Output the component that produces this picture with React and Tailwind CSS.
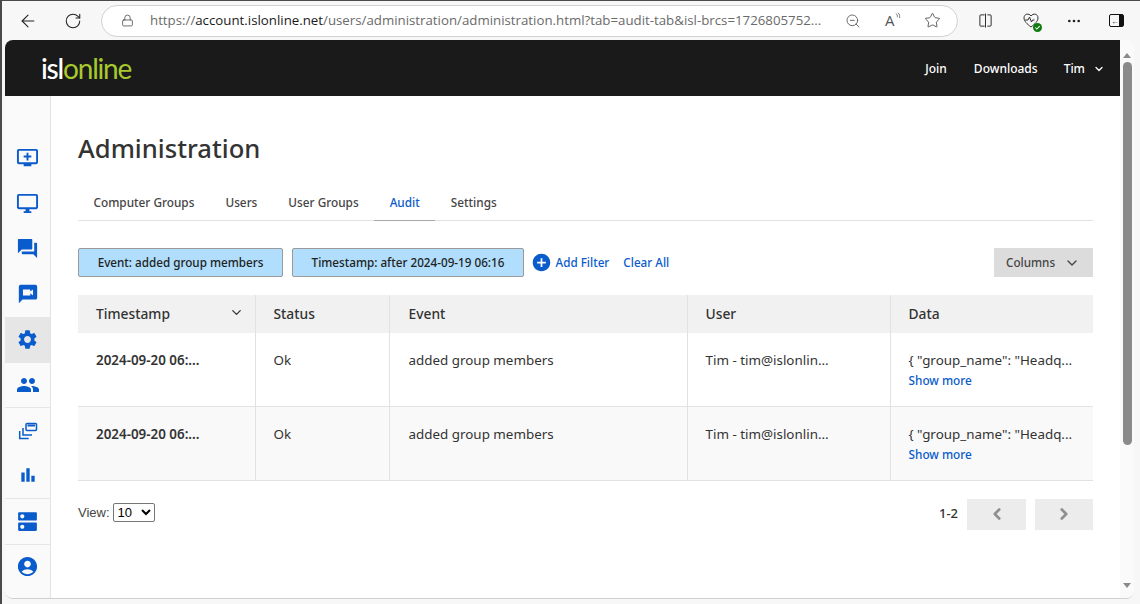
import React from "react";
import { ArrowLeft, RotateCw, Lock, ZoomOut, Star, MoreHorizontal, ChevronDown, ChevronLeft, ChevronRight } from "lucide-react";
import {
  MdAddToQueue,
  MdOutlineDesktopWindows,
  MdForum,
  MdSettings,
  MdPeople,
  MdBarChart,
  MdDns,
  MdAccountCircle,
  MdAddCircle,
} from "react-icons/md";

function WindowsIcon({ className }) {
  return (
    <svg viewBox="0 0 20 20" className={className} fill="none" stroke="currentColor" strokeWidth="1.5">
      <rect x="8" y="2.5" width="10.5" height="7" rx="1" fill="none" />
      <rect x="9.5" y="3.500" width="7.5" height="2" fill="currentColor" stroke="none" />
      <path d="M5 7v7h9" />
      <path d="M1.700 10v7.500h9" />
    </svg>
  );
}

function VideoBubble({ className }) {
  return (
    <svg viewBox="0 0 24 24" className={className}>
      <path
        fill="currentColor"
        fillRule="evenodd"
        d="M4 2h16a2 2 0 0 1 2 2v12a2 2 0 0 1-2 2H6l-4 4V4a2 2 0 0 1 2-2zM6.500 7v6.500h8v-2.300l3 2.300V7l-3 2.300V7z"
      />
    </svg>
  );
}

const sidebarItems = [
  { icon: <MdAddToQueue className="w-[23px] h-[23px]" /> },
  { icon: <MdOutlineDesktopWindows className="w-[23px] h-[23px]" /> },
  { icon: <MdForum className="w-[23px] h-[23px]" /> },
  { icon: <VideoBubble className="w-[22px] h-[22px]" /> },
  { icon: <MdSettings className="w-[23px] h-[23px]" />, active: true },
  { icon: <MdPeople className="w-[24px] h-[24px]" />, line: true },
  { icon: <WindowsIcon className="w-[20px] h-[20px]" />, line: true },
  { icon: <MdBarChart className="w-[20px] h-[20px]" /> },
  { icon: <MdDns className="w-[25px] h-[25px]" />, line: true },
  { icon: <MdAccountCircle className="w-[23px] h-[23px]" />, line: true },
];

const rows = [
  { bg: "bg-white" },
  { bg: "bg-[#f9f9f9]" },
];

function Toolbar() {
  return (
    <div className="h-[39px] flex items-center bg-[#f7f7f7] text-[#222]">
      <ArrowLeft className="w-[20px] h-[20px] ml-[16px]" strokeWidth={1.3} />
      <RotateCw className="w-[18px] h-[18px] ml-[26px]" strokeWidth={1.4} />
      <div className="ml-[19px] w-[857px] h-[32px] rounded-full bg-white border border-[#d2d2d2] flex items-center">
        <Lock className="w-[13px] h-[15px] ml-[19px] text-[#444]" strokeWidth={1.4} />
        <div className="ml-[16px] w-[674px] text-[13.270px] text-[#6a6a6a] whitespace-nowrap font-['Open_Sans',sans-serif]">
          https://<span className="text-[#1a1a1a]">account.islonline.net</span>/users/administration/administration.html?tab=audit-tab&isl-brcs=1726805752...
        </div>
        <ZoomOut className="w-[16px] h-[16px] ml-[21px] text-[#555]" strokeWidth={1.3} />
        <span className="ml-[24px] text-[15px] text-[#555] font-['Open_Sans',sans-serif]">A</span>
        <svg viewBox="0 0 8 10" className="w-[6px] h-[9px] mb-[8px] text-[#555]" fill="none" stroke="currentColor">
          <path d="M1 1c2 1 2.500 3 2 5M4 0c2.500 2 2.500 5 2 7" />
        </svg>
        <Star className="w-[17px] h-[17px] ml-[23px] text-[#444]" strokeWidth={1.2} />
      </div>
      <svg viewBox="0 0 16 16" className="w-[15px] h-[15px] ml-[20px]" fill="none" stroke="#222" strokeWidth="1">
        <path d="M7 2H3a1 1 0 0 0-1 1v10a1 1 0 0 0 1 1h4M10 2h3a1 1 0 0 1 1 1v10a1 1 0 0 1-1 1h-3M8 0.500v15" />
      </svg>
      <div className="relative ml-[29px] w-[18px] h-[18px]">
        <svg viewBox="0 0 18 18" className="w-[18px] h-[18px]" fill="none" stroke="#333" strokeWidth="1">
          <path d="M9 4C7 1 2 1.500 2 6c0 3 3 6 7 9 4-3 7-6 7-9 0-4.500-5-5-7-2zM3 8h3l1.500-3 2 5 1-2h2" />
        </svg>
        <span className="absolute right-[-2px] bottom-[-2px] w-[9px] h-[9px] rounded-full bg-[#107c10] flex items-center justify-center">
          <svg viewBox="0 0 8 8" className="w-[7px] h-[7px]" fill="none" stroke="white" strokeWidth="1.2">
            <path d="M1.500 4l1.800 1.800L6.500 2.500" />
          </svg>
        </span>
      </div>
      <MoreHorizontal className="w-[16px] h-[16px] ml-[26px] text-[#222]" strokeWidth={2} />
      <div className="ml-[27px] w-[15px] h-[13px] rounded-[2px] border border-[#111] flex items-center">
        <span className="text-[8px] leading-none ml-[1px] text-[#111]">←</span>
        <div className="ml-auto w-[5px] h-full bg-[#111]" />
      </div>
    </div>
  );
}

function Sidebar() {
  return (
    <div className="w-[46px] shrink-0 bg-[#fafafa] border-r border-[#e3e3e3] pt-[39px] text-[#0a5bcb] flex flex-col">
      {sidebarItems.map((item, i) => (
        <div
          key={i}
          className={`h-[45.400px] shrink-0 flex items-center justify-center ${item.active ? "bg-[#e6e6e6]" : ""} ${item.line ? "border-t border-[#e6e6e6]" : ""}`}
        >
          {item.icon}
        </div>
      ))}
    </div>
  );
}

function Content() {
  return (
    <div className="flex-1 min-w-0 bg-white pl-[27px] pr-[27px] pt-[33px] text-[#333] font-['Noto_Sans',sans-serif]">
      <h1 className="text-[25.600px] leading-[40px] font-medium">Administration</h1>

      <div className="mt-[20px] h-[32px] border-b border-[#e2e2e2] flex text-[11.800px] font-medium text-[#444]">
        <span className="px-[15.500px] h-[32px] leading-[26px]">Computer Groups</span>
        <span className="px-[15.500px] h-[32px] leading-[26px]">Users</span>
        <span className="px-[15.500px] h-[32px] leading-[26px]">User Groups</span>
        <span className="px-[15.500px] h-[32px] leading-[26px] text-[#0a5bcb] border-b border-[#a8a8a8]">Audit</span>
        <span className="px-[15.500px] h-[32px] leading-[26px]">Settings</span>
      </div>

      <div className="mt-[27px] flex items-center text-[11.700px] font-medium">
        <div className="w-[205px] h-[29px] rounded-[2px] bg-[#b0defc] border border-[#9a9a9a] flex items-center justify-center text-[#222]">
          Event: added group members
        </div>
        <div className="ml-[9px] w-[232px] h-[29px] rounded-[2px] bg-[#b0defc] border border-[#9a9a9a] flex items-center justify-center text-[#222]">
          Timestamp: after 2024-09-19 06:16
        </div>
        <MdAddCircle className="ml-[7px] w-[21px] h-[21px] text-[#0a5bcb]" />
        <span className="ml-[3.500px] text-[#0a5bcb]">Add Filter</span>
        <span className="ml-[14px] text-[#0a5bcb]">Clear All</span>
        <div className="ml-auto w-[99px] h-[29px] bg-[#dcdcdc] flex items-center pl-[12px] text-[#444]">
          Columns
          <ChevronDown className="ml-[9px] w-[16px] h-[16px]" strokeWidth={2} />
        </div>
      </div>

      <table className="mt-[18px] w-full table-fixed border-collapse text-[13.400px]">
        <thead>
          <tr className="h-[38px] bg-[#f1f1f1] text-left text-[13.800px]">
            <th className="w-[177px] pl-[18px] font-medium relative">
              Timestamp
              <ChevronDown className="absolute right-[11px] top-[10px] w-[15px] h-[15px]" strokeWidth={2} />
            </th>
            <th className="w-[134px] pl-[18px] font-medium border-l border-[#e2e2e2]">Status</th>
            <th className="w-[298px] pl-[19px] font-medium border-l border-[#e2e2e2]">Event</th>
            <th className="w-[203px] pl-[18px] font-medium border-l border-[#e2e2e2]">User</th>
            <th className="pl-[18px] font-medium border-l border-[#e2e2e2]">Data</th>
          </tr>
        </thead>
        <tbody>
          {rows.map((row, i) => (
            <tr key={i} className={`h-[73.500px] ${row.bg} border-b border-[#e2e2e2] align-top`}>
              <td className="pl-[18px] pt-[17px] font-semibold">2024-09-20 06:...</td>
              <td className="pl-[18px] pt-[17px] border-l border-[#e2e2e2]">Ok</td>
              <td className="pl-[19px] pt-[17px] border-l border-[#e2e2e2]">added group members</td>
              <td className="pl-[18px] pt-[17px] border-l border-[#e2e2e2]">Tim - tim@islonlin...</td>
              <td className="pl-[18px] pt-[17px] border-l border-[#e2e2e2]">
                <div className="whitespace-nowrap">{'{ "group_name": "Headq...'}</div>
                <div className="mt-[2px] text-[11.800px] font-medium text-[#0a5bcb]">Show more</div>
              </td>
            </tr>
          ))}
        </tbody>
      </table>

      <div className="mt-[18px] flex items-center">
        <div className="mb-[3px] flex items-center text-[13px] text-[#444] font-['Liberation_Sans',sans-serif]">
          View:
          <select defaultValue="10" className="ml-[3px] w-[42px] h-[19px] border border-[#767676] rounded-[2px] bg-white text-[13px] text-black appearance-auto">
            <option>10</option>
          </select>
        </div>
        <span className="ml-auto text-[13px] font-medium text-[#333]">1-2</span>
        <div className="ml-[9px] w-[59px] h-[31px] bg-[#ececec] flex items-center justify-center text-[#8f8f8f]">
          <ChevronLeft className="w-[18px] h-[18px]" strokeWidth={3.5} />
        </div>
        <div className="ml-[9px] w-[58px] h-[31px] bg-[#ececec] flex items-center justify-center text-[#8f8f8f]">
          <ChevronRight className="w-[18px] h-[18px]" strokeWidth={3.5} />
        </div>
      </div>
    </div>
  );
}

function Scrollbar() {
  return (
    <div className="w-[14px] shrink-0 bg-[#fafafa] flex flex-col items-center">
      <div className="mt-[13px] w-0 h-0 border-l-[4px] border-r-[4px] border-b-[5px] border-l-transparent border-r-transparent border-b-[#8a8a8a]" />
      <div className="mt-[4px] w-[9px] h-[383px] rounded-full bg-[#8a8a8a]" />
      <div className="mt-auto mb-[10px] w-0 h-0 border-l-[4px] border-r-[4px] border-t-[5px] border-l-transparent border-r-transparent border-t-[#8a8a8a]" />
    </div>
  );
}

export default function App() {
  return (
    <div className="w-[1140px] h-[604px] overflow-hidden bg-[#f7f7f7] border-t border-l-2 border-[#4a4a4a] flex flex-col">
      <Toolbar />
      <div className="ml-[3px] w-[1129px] h-[559px] rounded-[8px] overflow-hidden flex border-b border-[#d0d0d0]">
        <div className="flex-1 min-w-0 flex flex-col">
          <div className="h-[56px] shrink-0 bg-[#1a1a1a] flex items-center text-white font-['Noto_Sans',sans-serif]">
            <div className="ml-[36px] text-[28px] leading-none tracking-[-1.200px] font-medium font-['Lato',sans-serif]">
              isl<span className="text-[#a8c92e] font-normal">online</span>
            </div>
            <div className="ml-auto pt-[2px] flex items-center text-[12px] font-medium">
              <span>Join</span>
              <span className="ml-[27px]">Downloads</span>
              <span className="ml-[26px]">Tim</span>
              <ChevronDown className="ml-[8px] mr-[15px] w-[12px] h-[12px]" strokeWidth={2.5} />
            </div>
          </div>
          <div className="flex-1 min-h-0 flex">
            <Sidebar />
            <Content />
          </div>
        </div>
        <Scrollbar />
      </div>
    </div>
  );
}
